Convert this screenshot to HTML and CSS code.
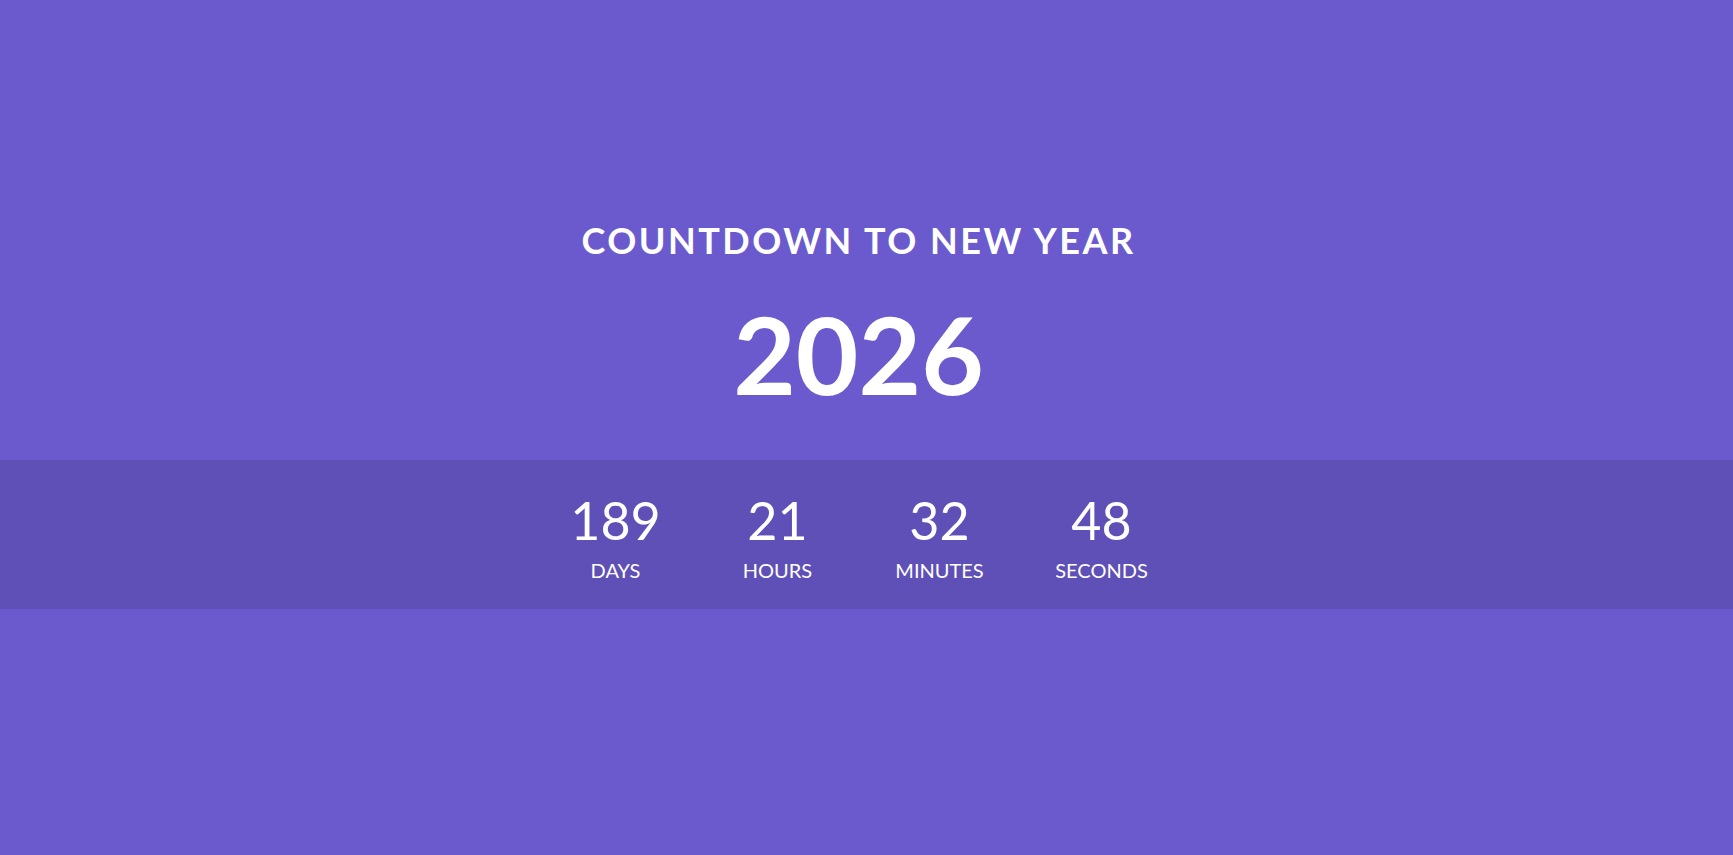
FILE: index.html
```html
<!DOCTYPE html>
<html lang="en">
<head>
  <meta charset="UTF-8" />
  <meta name="viewport" content="width=device-width, initial-scale=1.0" />
  <title>Countdown to New Year</title>
  <link rel="stylesheet" href="styles.css">
</head>
<body>
  <main class="countdown">
    <header class="intro">
      <h2 class="title">Countdown to New Year</h2>
      <div class="year" id="year">2026</div>
    </header>

    <section class="timer">
      <div class="unit">
        <span class="value" id="days">189</span>
        <span class="label">Days</span>
      </div>
      <div class="unit">
        <span class="value" id="hours">21</span>
        <span class="label">Hours</span>
      </div>
      <div class="unit">
        <span class="value" id="minutes">32</span>
        <span class="label">Minutes</span>
      </div>
      <div class="unit">
        <span class="value" id="seconds">48</span>
        <span class="label">Seconds</span>
      </div>
    </section>
  </main>
</body>
</html>
```

FILE: styles.css
```css
body {
  margin: 0;
  min-height: 100vh;
  background: #6a5acd;
  color: white;
  font-family: "Comic Sans MS", "Lato", sans-serif;
}

.intro {
  padding-top: 218px;
  padding-right: 16px;
  text-align: center;
}

.title {
  margin: 0;
  font-size: 36px;
  line-height: 44px;
  font-weight: 700;
  letter-spacing: 2.5px;
  text-transform: uppercase;
}

.year {
  margin-top: 33px;
  font-size: 108px;
  line-height: 117px;
  font-weight: 700;
}

.timer {
  margin-top: 48px;
  height: 149px;
  padding-top: 7px;
  padding-right: 16px;
  box-sizing: border-box;
  background: rgba(0, 0, 0, 0.1);
  display: flex;
  align-items: center;
  justify-content: center;
}

.unit {
  width: 162px;
  display: flex;
  flex-direction: column;
  align-items: center;
}

.value {
  font-size: 52px;
  line-height: 1;
}

.label {
  margin-top: 12px;
  font-size: 20px;
  text-transform: uppercase;
}
```
